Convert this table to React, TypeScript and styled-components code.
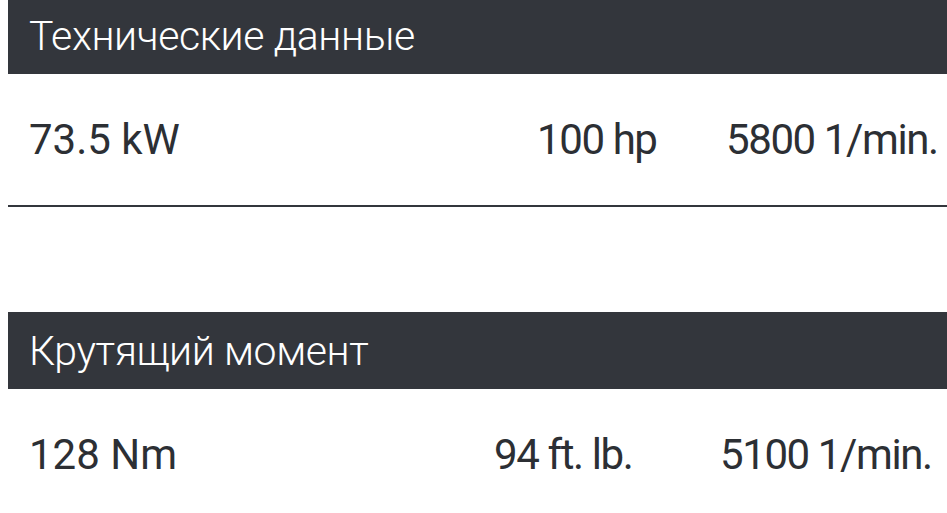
import styled, { createGlobalStyle } from "styled-components";

const GlobalStyle = createGlobalStyle`
  html, body {
    margin: 0;
    padding: 0;
    background: #ffffff;
    overflow: hidden;
  }
`;

type Spec = {
  title: string;
  main: string;
  alt: string;
  rpm: string;
  columns: string;
};

const specs: Spec[] = [
  {
    title: "Технические данные",
    main: "73.5 kW",
    alt: "100 hp",
    rpm: "5800 1/min.",
    columns: "1fr 189px 221px",
  },
  {
    title: "Крутящий момент",
    main: "128 Nm",
    alt: "94 ft. lb.",
    rpm: "5100 1/min.",
    columns: "1fr 226px 227px",
  },
];

export default function App() {
  return (
    <>
      <GlobalStyle />
      <Page>
        {specs.map((spec) => (
          <Section key={spec.title}>
            <Heading>{spec.title}</Heading>
            <Row $columns={spec.columns}>
              <MainValue>{spec.main}</MainValue>
              <SubValue>{spec.alt}</SubValue>
              <SubValue>{spec.rpm}</SubValue>
            </Row>
          </Section>
        ))}
      </Page>
    </>
  );
}

const Page = styled.div`
  display: flex;
  flex-direction: column;
  gap: 105px;
  margin-top: -3px;
  padding-left: 8px;
  font-family: Roboto, "Liberation Sans", sans-serif;
`;

const Section = styled.section`
  display: flex;
  flex-direction: column;
`;

const Heading = styled.h2`
  margin: 0;
  height: 77px;
  display: flex;
  align-items: center;
  padding-left: 21px;
  background: #33363c;
  color: #ffffff;
  font-size: 41px;
  font-weight: 300;
  letter-spacing: -0.4px;
`;

const Row = styled.div<{ $columns: string }>`
  display: grid;
  grid-template-columns: ${(p) => p.$columns};
  align-items: center;
  height: 131px;
  padding-left: 21px;
  border-bottom: 2px solid #33363c;
  color: #2c2f34;
`;

const MainValue = styled.span`
  font-size: 42px;
  font-weight: 400;
`;

const SubValue = styled.span`
  font-size: 42px;
  font-weight: 400;
  letter-spacing: -1.4px;
  white-space: nowrap;
`;
